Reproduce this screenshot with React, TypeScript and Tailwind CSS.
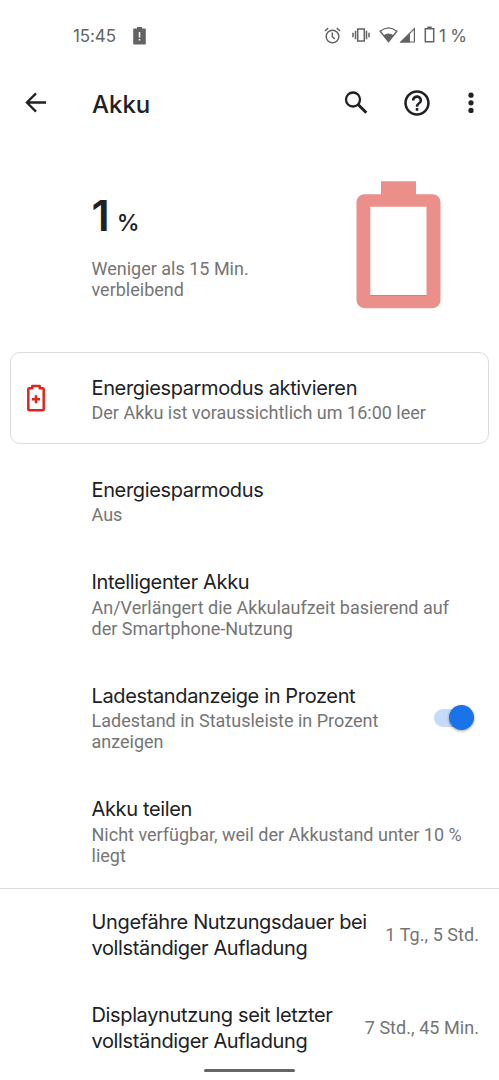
import { useState } from "react";
import type { ReactNode } from "react";

const titleFont = "font-['Inter','Roboto',sans-serif]";

function StatusBar() {
  return (
    <div className={`flex h-[70px] items-center pl-[73px] pt-[2px] text-[#636363] ${titleFont}`}>
      <span className="w-[60px] pt-[2px] text-[17px] tracking-[-0.1px]">15:45</span>
      <svg className="h-[18px] w-[13px]" viewBox="0 0 13 18" fill="none">
        <path fill="currentColor" d="M4 0h5v1.500h3q.8 0 .8.8v14.400q0 .8-.8.8H1q-.8 0-.8-.8V2.300q0-.8.8-.8h3z" />
        <path stroke="#fff" strokeWidth="1.500" d="M6.500 5v5.500M6.500 12v1.500" />
      </svg>
      <div className="ml-auto flex items-center pr-[32px]">
        <svg className="-mt-[2px] h-[17px] w-[17px]" viewBox="0 0 17 17" fill="none" stroke="currentColor" strokeWidth="1.500">
          <circle cx="8.500" cy="9.500" r="6.300" />
          <path d="M8.300 5.500v4.200l2.500 2.300M.8 4 4.200 1.100M16.200 4 12.800 1.100" />
        </svg>
        <svg className="-mt-[2px] ml-[11px] h-[14px] w-[18px]" viewBox="0 0 18 14" fill="none" stroke="currentColor" strokeWidth="1.500">
          <rect x="5.700" y="1" width="6.600" height="12" />
          <path d="M3.500 2.700v8.600M14.500 2.700v8.600M1 4.700v4.600M17 4.700v4.600" />
        </svg>
        <svg className="-mt-[2px] ml-[9px] h-[16px] w-[19px]" viewBox="0 0 19 16" fill="none">
          <path stroke="currentColor" strokeWidth="1.400" d="M1.200 4.300Q9.500-2.500 17.800 4.300L9.500 14.600z" />
          <path fill="currentColor" d="M4.500 8.200q5-3.500 10 0l-5 7z" />
        </svg>
        <svg className="-mt-[2px] ml-[1px] h-[16px] w-[17px]" viewBox="0 0 17 16" fill="none">
          <path stroke="currentColor" strokeWidth="1.200" d="M2 15 15.400 1.600V15z" />
          <path fill="currentColor" d="M.8 15.600 11 5.400v10.200z" />
        </svg>
        <svg className="-mt-[3px] ml-[8px] h-[17px] w-[11px]" viewBox="0 0 11 17" fill="none">
          <path stroke="currentColor" strokeWidth="1.500" d="M1.300 2.800h8.400v12.900H1.300z" />
          <path fill="currentColor" d="M3.300.5h4.400v2.500H3.300z" />
        </svg>
        <span className="ml-[4px] w-[28px] whitespace-nowrap pt-[2px] text-[17px] tracking-[-0.2px]">1 %</span>
      </div>
    </div>
  );
}

function AppBar() {
  return (
    <header className="flex h-[66px] items-center pl-[25px] pr-[25px] text-[#202124]">
      <svg className="h-[22px] w-[22px]" viewBox="0 0 22 22" fill="none" stroke="currentColor" strokeWidth="2.300">
        <path d="M21 10.500H2.500M11 1.400 1.900 10.500 11 19.600" />
      </svg>
      <h1 className={`ml-[45px] pt-[3px] text-[24px] font-medium ${titleFont}`}>Akku</h1>
      <div className="ml-auto flex items-center">
        <svg className="-mt-[1px] h-[24px] w-[24px]" viewBox="0 0 24 24" fill="none" stroke="currentColor">
          <circle cx="9" cy="8.500" r="7" strokeWidth="2.300" />
          <path d="m13.800 13.300 8.500 8.500" strokeWidth="3" />
        </svg>
        <svg className="-mt-[1px] ml-[35px] h-[28px] w-[28px]" viewBox="1 1 22 22" fill="currentColor">
          <path d="M11 18h2v-2h-2v2zm1-16C6.480 2 2 6.480 2 12s4.480 10 10 10 10-4.480 10-10S17.520 2 12 2zm0 18c-4.410 0-8-3.590-8-8s3.590-8 8-8 8 3.590 8 8-3.590 8-8 8zm0-14c-2.210 0-4 1.790-4 4h2c0-1.100.9-2 2-2s2 .9 2 2c0 2-3 1.750-3 5h2c0-2.250 3-2.500 3-5 0-2.210-1.790-4-4-4z" />
        </svg>
        <svg className="ml-[37px] h-[22px] w-[6px]" viewBox="0 0 6 22" fill="currentColor">
          <circle cx="3" cy="3.200" r="2.600" />
          <circle cx="3" cy="10.800" r="2.600" />
          <circle cx="3" cy="18.400" r="2.600" />
        </svg>
      </div>
    </header>
  );
}

function BatteryHeader() {
  return (
    <section className="flex h-[216px] justify-between pl-[91.500px] pr-[58.500px]">
      <div className="pt-[52px]">
        <div className={`flex h-[54px] items-baseline text-[#202124] ${titleFont}`}>
          <span className="text-[43px] leading-[54px] font-semibold">1</span>
          <span className="ml-[7px] text-[23px] font-medium">%</span>
        </div>
        <p className="mt-[15.500px] w-[190px] text-[18px] leading-[21.300px] text-[#757575]">
          Weniger als 15 Min. verbleibend
        </p>
      </div>
      <svg className="mt-[45px] h-[128px] w-[85px]" viewBox="0 0 85 128">
        <path
          fill="#ea8f89"
          fillRule="evenodd"
          d="M25 .3h35v12.900h16.500a8 8 0 0 1 8 8v98a8 8 0 0 1-8 8h-68a8 8 0 0 1-8-8v-98a8 8 0 0 1 8-8H25zM14.300 25.800v88.400h56.200V25.800z"
        />
        <path stroke="#dc7b76" strokeWidth="1" d="M14.300 114.500h56.200" />
      </svg>
    </section>
  );
}

function TipCard() {
  return (
    <section className="mx-[10px] flex h-[92px] rounded-[10px] border border-[#dadce0] pt-[22px]">
      <svg className="ml-[16px] mt-[9px] h-[28px] w-[18px]" viewBox="0 0 18 28" fill="none" stroke="#df261d">
        <path
          strokeWidth="2.500"
          strokeLinejoin="round"
          d="M5.300 4.200V2h7.400v2.200h3q1 0 1 1v20.100q0 1-1 1H2.300q-1 0-1-1V5.200q0-1 1-1z"
        />
        <path strokeWidth="2.500" d="M9 11.300v8M5 15.300h8" />
      </svg>
      <div className="ml-[46.500px]">
        <Title>Energiesparmodus aktivieren</Title>
        <Summary>Der Akku ist voraussichtlich um 16:00 leer</Summary>
      </div>
    </section>
  );
}

function Title({ children }: { children: ReactNode }) {
  return (
    <h2 className={`pt-[1px] text-[20px] leading-[25.500px] tracking-[-0.360px] text-[#202124] ${titleFont}`}>
      {children}
    </h2>
  );
}

function Summary({ children }: { children: ReactNode }) {
  return <p className="mt-[0.800px] text-[18px] leading-[21.300px] text-[#757575]">{children}</p>;
}

function Preference({ title, summary, action }: { title: string; summary: ReactNode; action?: ReactNode }) {
  return (
    <div className="flex items-center justify-between pb-[21.500px] pl-[91.500px] pr-[25px] pt-[22.100px]">
      <div className="whitespace-nowrap">
        <Title>{title}</Title>
        <Summary>{summary}</Summary>
      </div>
      {action}
    </div>
  );
}

function Toggle() {
  const [on, setOn] = useState(true);

  return (
    <button
      role="switch"
      aria-checked={on}
      aria-label="Ladestandanzeige in Prozent"
      onClick={() => setOn(!on)}
      className={`flex h-[18px] w-[40px] shrink-0 items-center rounded-full ${
        on ? "justify-end bg-[#c6dbf9]" : "justify-start bg-gray-300"
      }`}
    >
      <span
        className={`h-[25px] w-[25px] rounded-full shadow-[0_1px_3px_rgba(0,0,0,0.4)] ${
          on ? "bg-[#1a73e8]" : "bg-white"
        }`}
      />
    </button>
  );
}

function UsageRow({ title, value }: { title: ReactNode; value: string }) {
  return (
    <div className="flex h-[93px] items-center justify-between pl-[91.500px] pr-[20px]">
      <div className="whitespace-nowrap">
        <Title>{title}</Title>
      </div>
      <span className="-mt-[1px] whitespace-nowrap text-[18px] tracking-[0.050px] text-[#757575]">{value}</span>
    </div>
  );
}

export default function App() {
  return (
    <div className="relative h-[1080px] w-[499px] overflow-hidden bg-white font-['Roboto',sans-serif]">
      <StatusBar />
      <AppBar />
      <BatteryHeader />
      <TipCard />
      <main className="mt-[11px]">
        <Preference title="Energiesparmodus" summary="Aus" />
        <Preference
          title="Intelligenter Akku"
          summary={
            <>
              An/Verlängert die Akkulaufzeit basierend auf
              <br />
              der Smartphone-Nutzung
            </>
          }
        />
        <Preference
          title="Ladestandanzeige in Prozent"
          summary={
            <>
              Ladestand in Statusleiste in Prozent
              <br />
              anzeigen
            </>
          }
          action={<Toggle />}
        />
        <Preference
          title="Akku teilen"
          summary={
            <>
              Nicht verfügbar, weil der Akkustand unter 10 %
              <br />
              liegt
            </>
          }
        />
        <div className="border-t border-[#dadce0]">
          <UsageRow
            title={
              <>
                Ungefähre Nutzungsdauer bei
                <br />
                vollständiger Aufladung
              </>
            }
            value="1 Tg., 5 Std."
          />
          <UsageRow
            title={
              <>
                Displaynutzung seit letzter
                <br />
                vollständiger Aufladung
              </>
            }
            value="7 Std., 45 Min."
          />
        </div>
      </main>
      {/* gesture bar */}
      <div className="absolute bottom-[8px] left-[204px] h-[3px] w-[91px] rounded-full bg-[#666]" />
    </div>
  );
}
